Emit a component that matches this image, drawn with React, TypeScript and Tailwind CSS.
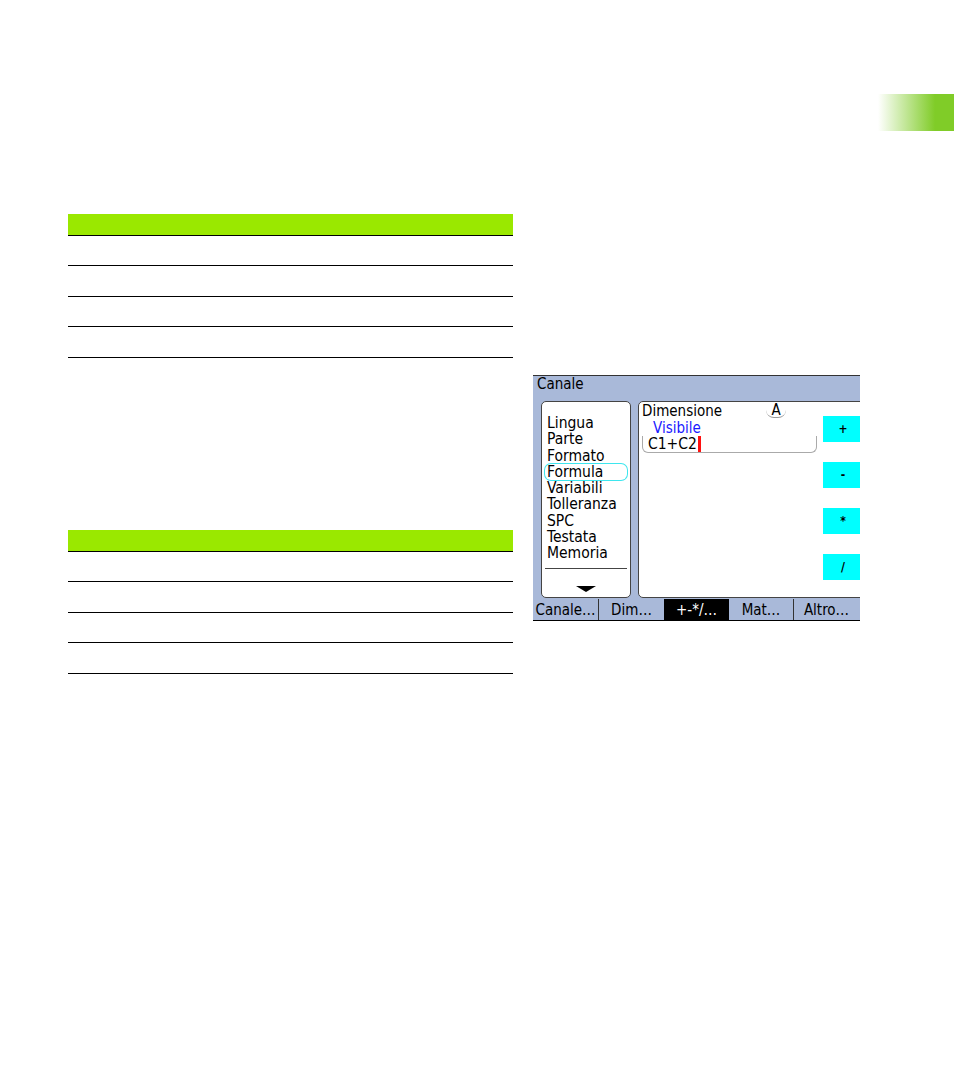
import React from "react";

const SCREEN_FONT = { fontFamily: '"DejaVu Sans Condensed", "DejaVu Sans", "Liberation Sans", sans-serif' };

const MENU = ["Lingua", "Parte", "Formato", "Formula", "Variabili", "Tolleranza", "SPC", "Testata", "Memoria"];
const OPS = ["+", "-", "*", "/"];
const TABS = ["Canale…", "Dim…", "+-*/…", "Mat…", "Altro…"];

function Table() {
  const rows = ["h-[30px]", "h-[31px]", "h-[30px]", "h-[31px]"];
  return (
    <div className="w-[445px]">
      <div className="h-[22px] bg-[#9ae800] border-b border-black" />
      {rows.map((h, i) => (
        <div key={i} className={`${h} border-b border-black`} />
      ))}
    </div>
  );
}

function Screen() {
  return (
    <div
      className="w-[327px] h-[246px] bg-[#a9b9d9] border-t border-[#333] border-b border-b-black overflow-hidden flex flex-col text-black"
      style={SCREEN_FONT}
    >
      <div className="h-[25px] pl-[4px] text-[15px] leading-[17px]">Canale</div>
      <div className="flex h-[197px] pl-[8px] gap-[7px]">
        {/* menu list */}
        <div className="w-[90px] shrink-0 bg-white border border-[#444] rounded-[5px] flex flex-col pt-[13px] px-[3px]">
          {MENU.map((m) => (
            <div
              key={m}
              className={`h-[16.3px] text-[15.5px] leading-[16.3px] whitespace-nowrap pl-[2px] ${
                m === "Formula" ? "ring-1 ring-[#3ee6ee] rounded-[6px]" : ""
              }`}
            >
              {m}
            </div>
          ))}
          <div className="mt-[6px] border-t border-[#444]" />
          <div className="flex justify-center mt-[17px]">
            <svg width="20" height="6" viewBox="0 0 20 6">
              <path d="M0 0 L20 0 L10 6 Z" fill="#000" />
            </svg>
          </div>
        </div>
        {/* formula panel */}
        <div className="w-[260px] shrink-0 bg-white border border-[#444] rounded-[5px] flex">
          <div className="w-[180px] shrink-0 pl-[3px] pt-[1px]">
            <div className="flex items-center text-[15px] leading-[16.5px]">
              <span>Dimensione</span>
              <span className="ml-[44px] w-[20px] text-center border-b border-[#999] rounded-b-[8px] leading-[13px]">A</span>
            </div>
            <div className="pl-[11px] text-[15px] leading-[16.5px] text-[#1a1aff]">Visibile</div>
            <div className="border-b border-x border-[#aaa] rounded-b-[6px] pl-[5px] h-[17px] flex items-end mr-[2px]">
              <span className="text-[15.5px] leading-[16px]">C1+C2</span>
              <span className="w-[3px] h-[16px] bg-[#ff1010] ml-[1px]" />
            </div>
          </div>
          <div className="flex flex-col pt-[14px] gap-[20px] ml-[4px]">
            {OPS.map((o) => (
              <div
                key={o}
                className="w-[40px] h-[26px] bg-[#00ffff] flex items-center justify-center text-[12px] font-bold"
              >
                {o}
              </div>
            ))}
          </div>
        </div>
      </div>
      <div className="flex h-[22px] border-t border-[#a9b9d9]">
        {TABS.map((t, i) => (
          <div
            key={t}
            className={`${i === 0 ? "w-[66px]" : "w-[65px]"} shrink-0 flex items-center justify-center text-[15px] leading-[16px] ${
              i === 2 ? "bg-black text-white" : ""
            } ${i === 0 || i === 3 ? "border-r border-[#333]" : ""}`}
          >
            {t}
          </div>
        ))}
      </div>
    </div>
  );
}

export default function App() {
  return (
    <div className="w-[954px] h-[1090px] bg-white">
      <div className="pt-[94px] flex justify-end">
        <div className="w-[76px] h-[37px] bg-[linear-gradient(to_right,#ffffff_0%,#80cc28_75%,#80cc28_100%)]" />
      </div>
      <div className="flex pl-[68px]">
        <div className="flex flex-col">
          <div className="mt-[83px]">
            <Table />
          </div>
          <div className="mt-[172px]">
            <Table />
          </div>
        </div>
        <div className="ml-[20px] mt-[244px]">
          <Screen />
        </div>
      </div>
    </div>
  );
}
